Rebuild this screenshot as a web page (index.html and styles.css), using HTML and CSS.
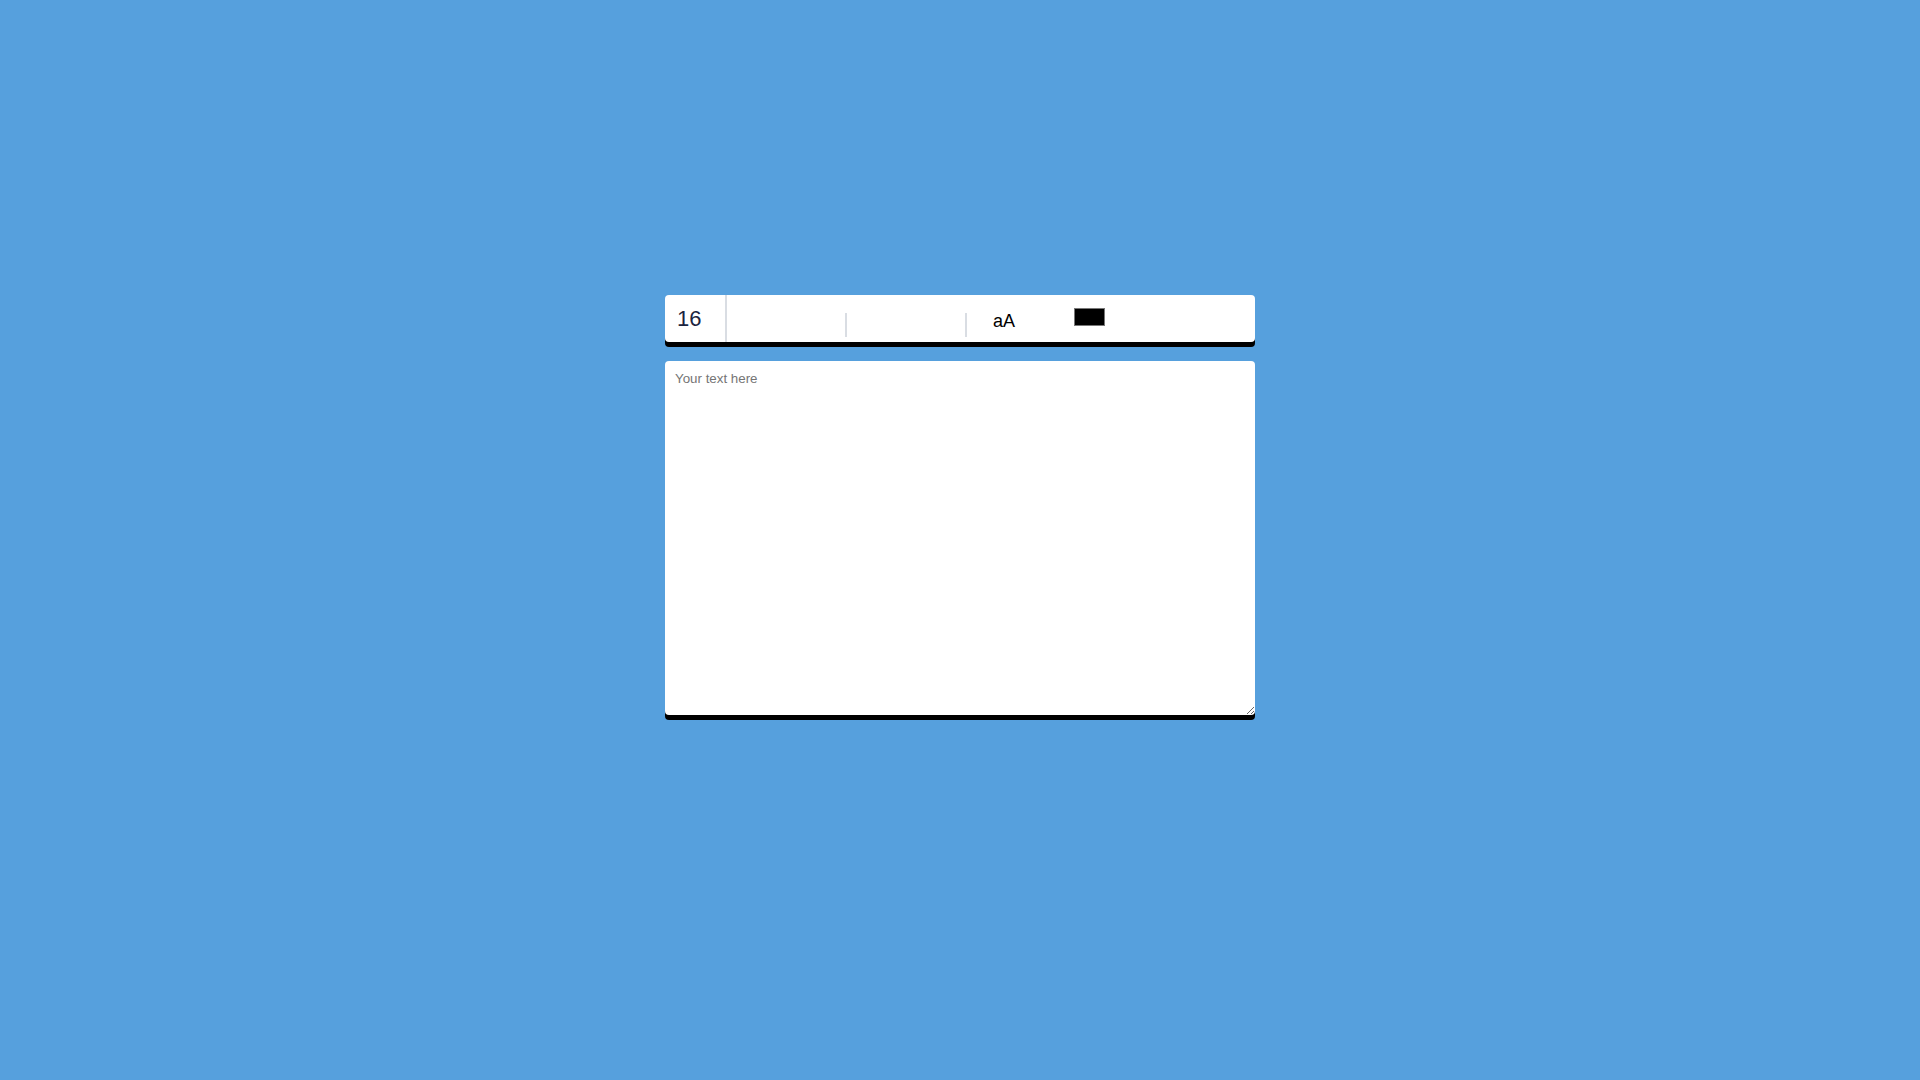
FILE: index.html
```html
<!DOCTYPE html>
<html lang="en">
<head>
<meta charset="utf-8">
<title>Editor</title>
<link rel="stylesheet" href="styles.css">
</head>
<body>
<main class="page">
  <div class="editor">
    <div class="toolbar">
      <div class="size">16</div>
      <div class="slot"></div>
      <div class="sep"></div>
      <div class="slot"></div>
      <div class="sep"></div>
      <div class="case">aA</div>
      <div class="swatch"></div>
    </div>
    <textarea class="text" placeholder="Your text here"></textarea>
  </div>
</main>
</body>
</html>
```
FILE: styles.css
```css
html, body {
  margin: 0;
  padding: 0;
  height: 100%;
}
body {
  background: #56a0dd;
  font-family: "Liberation Sans", Arial, sans-serif;
}
.page {
  padding-top: 295px;
}
.editor {
  width: 590px;
  margin: 0 auto;
  display: flex;
  flex-direction: column;
}
.toolbar {
  display: flex;
  align-items: flex-start;
  height: 47px;
  background: #fff;
  border-radius: 4px;
  box-shadow: 0 5px 0 #000;
}
.size {
  box-sizing: border-box;
  width: 62px;
  height: 47px;
  padding-left: 12px;
  border-right: 2px solid #d9dde3;
  font-size: 22px;
  line-height: 22px;
  padding-top: 13px;
  color: #1b2440;
}
.slot {
  width: 118px;
  height: 47px;
}
.sep {
  width: 2px;
  height: 24px;
  margin-top: 18px;
  background: #d9dde3;
}
.case {
  margin-left: 26px;
  margin-top: 17px;
  font-size: 18px;
  line-height: 18px;
  color: #000;
}
.swatch {
  box-sizing: border-box;
  width: 31px;
  height: 18px;
  margin-left: 59px;
  margin-top: 13px;
  background: #000;
  border: 1px solid #777;
}
.text {
  box-sizing: border-box;
  width: 590px;
  height: 354px;
  margin: 19px 0 0;
  padding: 10px;
  border: none;
  border-radius: 4px;
  box-shadow: 0 5px 0 #000;
  background: #fff;
  outline: none;
  font-family: "Liberation Sans", Arial, sans-serif;
  font-size: 13.33px;
  color: #000;
}
.text::placeholder {
  color: #757575;
}
```
